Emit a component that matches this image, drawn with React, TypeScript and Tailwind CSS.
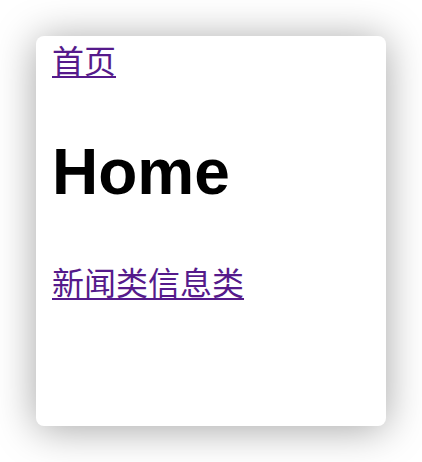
export default function App() {
  return (
    <div className="w-[422px] h-[462px] bg-white pt-[36px] pl-[36px] overflow-hidden" style={{ fontFamily: '"Liberation Sans", "Noto Sans CJK SC", sans-serif' }}>
      <div className="w-[350px] h-[390px] bg-white rounded-[8px] shadow-[0_3px_40px_rgba(0,0,0,0.36)] px-4 pt-[6px]">
        <div className="text-[32px] leading-[40px]">
          <a href="#" className="text-[#551a8b] underline underline-offset-[3px] decoration-[2px]">首页</a>
        </div>
        <h1 className="text-[64px] leading-[74px] mt-[53px] text-black font-bold">Home</h1>
        <div className="text-[32px] leading-[40px] mt-[55px]">
          <a href="#" className="text-[#551a8b] underline underline-offset-[3px] decoration-[2px]">新闻类信息类</a>
        </div>
      </div>
    </div>
  );
}
